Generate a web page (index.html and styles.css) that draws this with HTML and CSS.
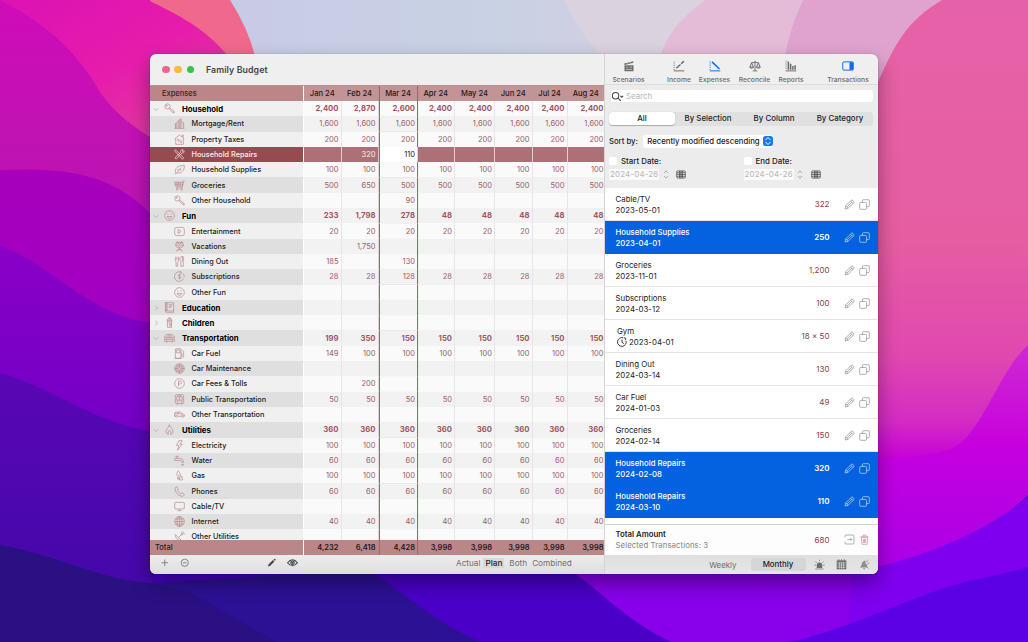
FILE: index.html
```html
<!DOCTYPE html>
<html lang="en">
<head>
  <meta charset="UTF-8">
  <meta name="viewport" content="width=device-width, initial-scale=1">
  <title>Family Budget</title>
  <link rel="stylesheet" href="styles.css">
</head>
<body>

<!-- Wallpaper -->
<svg class="wallpaper" viewBox="0 0 1028 642" preserveAspectRatio="none">
  <defs>
    <linearGradient id="w-left" x1="0" y1="0" x2="0" y2="1"><stop offset="0" stop-color="#cf0cb8"/><stop offset="1" stop-color="#b716b0"/></linearGradient>
    <linearGradient id="w-hot" x1="0" y1="0" x2="1" y2="1"><stop offset="0" stop-color="#dc12b4"/><stop offset=".5" stop-color="#e61cac"/><stop offset="1" stop-color="#dc4896"/></linearGradient>
    <linearGradient id="w-p1" x1="0" y1="0" x2="0" y2="1"><stop offset="0" stop-color="#a800bc"/><stop offset="1" stop-color="#a000c4"/></linearGradient>
    <linearGradient id="w-p2" x1="0" y1="0" x2="0" y2="1"><stop offset="0" stop-color="#8a00c6"/><stop offset="1" stop-color="#7000c6"/></linearGradient>
    <linearGradient id="w-p3" x1="0" y1="0" x2="0" y2="1"><stop offset="0" stop-color="#5a06b6"/><stop offset="1" stop-color="#4208a8"/></linearGradient>
    <linearGradient id="w-pink" x1="0" y1="0" x2="0" y2="1"><stop offset="0" stop-color="#e662a8"/><stop offset=".42" stop-color="#e65da2"/><stop offset=".62" stop-color="#e048b0"/><stop offset=".73" stop-color="#d42cc4"/><stop offset=".8" stop-color="#c600d8"/><stop offset="1" stop-color="#a400e8"/></linearGradient>
    <linearGradient id="w-mag" x1="0" y1="0" x2="0" y2="1"><stop offset="0" stop-color="#cf2ad0"/><stop offset=".45" stop-color="#c600de"/><stop offset="1" stop-color="#a800e8"/></linearGradient>
    <linearGradient id="w-sky" x1="0" y1="0" x2="1" y2="0"><stop offset="0" stop-color="#c9cae6"/><stop offset=".7" stop-color="#c8d2e4"/><stop offset="1" stop-color="#d0cfe2"/></linearGradient>
  </defs>
  <rect width="1028" height="642" fill="#4a00c8"/>
  <path d="M220 0H600V80H220z" fill="url(#w-sky)"/>
  <path d="M564 0C575 22 585 40 602 56H720V0z" fill="#dbd2df"/>
  <path d="M705 0C690 12 668 28 660 58H830V0z" fill="#e5bcd8"/>
  <path d="M803 0C795 18 788 36 785 58L890 110H950V0z" fill="#e0a3cf"/>
  <path d="M145 0H230Q248 28 255 56L220 60z" fill="#f0698c"/>
  <path d="M0 0H150V240H0z" fill="url(#w-left)"/>
  <path d="M0 0H148C180 16 205 28 228 56L155 60V140C135 128 115 114 100 92C85 66 60 30 0 0z" fill="url(#w-hot)"/>
  <path d="M0 170C60 168 110 170 155 218V350H0z" fill="url(#w-p1)"/>
  <path d="M0 246C50 262 90 318 155 323V450H0z" fill="url(#w-p2)"/>
  <path d="M0 373C50 386 95 424 155 432V610H0z" fill="url(#w-p3)"/>
  <path d="M0 545C60 556 100 582 150 583L374 570L480 642H0z" fill="#2d1195"/>
  <path d="M0 545C60 556 100 580 150 583L190 592L276 642H0z" fill="#2a1083"/>
  <path d="M374 560V574C400 590 435 622 480 642H675V560z" fill="#4b00c8"/>
  <path d="M560 556L575 574C600 590 625 620 671 642H1028V540z" fill="#8800ea"/>
  <path d="M942 0C905 22 895 45 878 82L860 100V575C930 560 980 540 1028 495V0z" fill="url(#w-pink)"/>
  <path d="M1028 345C1000 370 985 425 958 445C940 458 900 454 870 462V572C930 560 980 540 1028 495z" fill="url(#w-mag)"/>
  <path d="M850 574C930 555 980 535 1028 497V570L850 628z" fill="#7e00ee"/>
  <path d="M790 642C850 628 900 602 945 588C975 578 1005 575 1028 567V642z" fill="#5c00e6"/>
</svg>

<!-- Icon set, 16 x 16 -->
<svg class="icon-set">
  <symbol id="i-key" viewBox="0 0 16 16"><circle cx="5" cy="5" r="3.8"/><circle cx="4" cy="4" r=".8"/><path d="M7.2 8.2l6 6.3 1.6-.2.1-1.8-1.8-.6-.3-1.6-1.6-.4L8.4 7"/></symbol>
  <symbol id="i-building" viewBox="0 0 16 16"><path d="M1 15h14M2 15V8l4-2v9M6 6V4l4-3v14M10 5l4 2v8M7.5 5v1M7.5 8v1M7.5 11v1M12 8v1M12 11v1M4 9v1M4 12v1M3 8v7M8.500 3v12"/></symbol>
  <symbol id="i-house" viewBox="0 0 16 16"><path d="M1 7l7-5.500 7 5.500M2.500 6.500V15h11V6.500M12 4V1.500h1.500V5M6 12l4-4"/><circle cx="6" cy="8.500" r="1"/><circle cx="10" cy="11.500" r="1"/></symbol>
  <symbol id="i-tools" viewBox="0 0 16 16"><path d="M2 1l12 12-1.500 2L1 3zM14.500 2.500l-2 1.200-.8-.8L13 1C10 .5 9 3 10 4.500L2 12c-1 1.500.8 3 2 2l7.500-8.200c2 .8 4-1 3-3.300z"/></symbol>
  <symbol id="i-leaf" viewBox="0 0 16 16"><path d="M2 14c-1-8 3-12 13-12 .5 8-4 12-11 11M2 15L11 5M6 10V7M8 8.500h3"/></symbol>
  <symbol id="i-cart" viewBox="0 0 16 16"><path d="M15.500 1.500h-2l-1.500 10H3M1 3h12l-.8 6H2.300zM4 3v6M6.500 3v6M9 3v6M1.500 6H13"/><circle cx="4.500" cy="13.500" r="1.100"/><circle cx="11" cy="13.500" r="1.100"/></symbol>
  <symbol id="i-smile" viewBox="0 0 16 16"><circle cx="8" cy="8" r="7"/><path d="M4.500 9.500c1 3.500 6 3.500 7 0zM5.500 5v2M10.500 5v2"/></symbol>
  <symbol id="i-play" viewBox="0 0 16 16"><rect x="1" y="2" width="14" height="12" rx="3"/><path d="M6 5l4.500 3L6 11z"/></symbol>
  <symbol id="i-vacation" viewBox="0 0 16 16"><path d="M3 6V2h10v4M2 6h12l-2 3H4zM5 2V0M11 2V0M8 9v3M3 15l5-3 5 3M5 12h6M5 3.500h6"/></symbol>
  <symbol id="i-fork" viewBox="0 0 16 16"><path d="M2 1v5c0 2 1 2 1 3v6h2.500V9c0-1 1-1 1-3V1M4.200 1v5M10 1c-2 1-2 6 0 7v7h3.500V1zM12 1v7"/></symbol>
  <symbol id="i-sub" viewBox="0 0 16 16"><path d="M14 11A7 7 0 1 1 11 2M13 4a7 7 0 0 1 2 5M11 2L9 .5M11 2L9.500 4M10 6c-1-1.500-4-1-3.500.8S10 8 10 9.500 7 11.500 6 10M8 4v8"/></symbol>
  <symbol id="i-book" viewBox="0 0 16 16"><path d="M2 1h12v14H3.500Q2 15 2 13.500zM4.500 1v12M3.200 1v12M2 13h12M7 4h5M7 6h5M7 8h3"/></symbol>
  <symbol id="i-bottle" viewBox="0 0 16 16"><path d="M7 3V1h2v2M5 5V3h6v2M4.500 5h7v2h-7zM5 7v8h6V7M7 9h4M7 11h4M7 13h4"/></symbol>
  <symbol id="i-garage" viewBox="0 0 16 16"><path d="M1 13V5l3-3h8l3 3v8M1 6h14M3 13V9l1.500-2h7L13 9v4h-2v-1H5v1zM3 9.500h10M5 4h6"/></symbol>
  <symbol id="i-fuel" viewBox="0 0 16 16"><path d="M2 15V2q0-1 1-1h6q1 0 1 1v13zM3.500 3h5v4h-5zM10 8h1.500v4c0 2 2.500 2 2.500 0V5l-2.500-2M1 15h10"/></symbol>
  <symbol id="i-tire" viewBox="0 0 16 16"><circle cx="8" cy="8" r="7"/><circle cx="8" cy="8" r="5.500"/><circle cx="8" cy="8" r="3.800"/><circle cx="8" cy="8" r="1.700"/><path d="M8 1v5.300M8 9.700V15M1 8h5.300M9.700 8H15"/></symbol>
  <symbol id="i-parking" viewBox="0 0 16 16"><circle cx="8" cy="8" r="7"/><path d="M6.500 12V4.500H9q2 .2 2 2T9 8.600H6.500"/></symbol>
  <symbol id="i-train" viewBox="0 0 16 16"><rect x="2" y="1" width="12" height="13" rx="1.500"/><path d="M4 4h8v5H4zM8 4v5M5 2.500h6M4 15.500l2-2M12 15.500l-2-2"/><circle cx="5" cy="11.300" r=".8"/><circle cx="11" cy="11.300" r=".8"/></symbol>
  <symbol id="i-car" viewBox="0 0 16 16"><path d="M2 10.500H.8V6.500Q1 4.500 3 4.500h6l3 2.500 2 .5q1.500.5 1.200 3H14M5 10.500h6M1 7h11M6 4.500V7"/><circle cx="3.500" cy="10.500" r="1.500"/><circle cx="12.500" cy="10.500" r="1.500"/></symbol>
  <symbol id="i-flame" viewBox="0 0 16 16"><path d="M8 1c1 4 5 5.500 5 9.500 0 3-2 4.500-3.500 4.500 1.500-2 0-4-1.500-6-1.500 2-3 4-1.500 6C4.500 15 3 13 3 10.500 3 8 7 5 8 1z"/></symbol>
  <symbol id="i-bolt" viewBox="0 0 16 16"><path d="M7 1L3.500 8H7l-2 7 7-9H8.500L12 1z"/></symbol>
  <symbol id="i-tap" viewBox="0 0 16 16"><path d="M2 2h5M4.500 2v3M1 5h6c5 0 7 2 7 5.500h-3C11 9 10 8 7 8H1zM11 13.500h3l-1.500 2z"/></symbol>
  <symbol id="i-gas" viewBox="0 0 16 16"><path d="M6 1c1 2 3 3 3 5.500S4 10 4 6.500 6 4 6 1zM6 10v4M8 10h4v4.500H8zM9 8.500h2M4 11.500l4 2"/></symbol>
  <symbol id="i-phone" viewBox="0 0 16 16"><path d="M4 1L1.500 3C1 9 7 15.500 13 15l2.500-2.500L12 10l-2 1.500C8 10.500 6 8.500 5 6.500l1.500-2z"/></symbol>
  <symbol id="i-tv" viewBox="0 0 16 16"><rect x="1" y="2" width="14" height="9.500" rx="1"/><path d="M8 11.500V14M5 14h6"/></symbol>
  <symbol id="i-globe" viewBox="0 0 16 16"><circle cx="8" cy="8" r="7"/><ellipse cx="8" cy="8" rx="3.500" ry="7"/><path d="M8 1v14M1 8h14M2 4.500h12M2 11.500h12"/></symbol>
  <symbol id="i-dish" viewBox="0 0 16 16"><path d="M2 5c0 6 4 9 9 9zM6.500 9.500L11 5M4 13l-1 3h6"/><circle cx="11.500" cy="4.500" r="1.200"/><path d="M11 1q4 0 4 4"/></symbol>
  <symbol id="i-pencil" viewBox="0 0 16 16"><path d="M1.500 14.500l1-4.500 8-8q1.200-1 2.500 0l1 1q1 1.200 0 2.500l-8 8zM2.500 10l3.500 3.500M9.500 3l3.500 3.500M4.500 11.500l7-7"/></symbol>
  <symbol id="i-copy" viewBox="0 0 16 16"><rect x="1" y="5" width="10" height="10" rx="1.500"/><path d="M5 5V2.500Q5 1 6.500 1h7Q15 1 15 2.500v7q0 1.500-1.500 1.500H11"/></symbol>
</svg>

<div class="window">
  <div class="main">
    <header class="titlebar">
      <span class="light red"></span><span class="light yellow"></span><span class="light green"></span>
      <h1>Family Budget</h1>
    </header>

    <div class="sheet">
      <div class="row head">
        <div class="name">Expenses</div>
        <div class="cell">Jan 24</div><div class="cell">Feb 24</div><div class="cell current">Mar 24</div><div class="cell">Apr 24</div><div class="cell">May 24</div><div class="cell">Jun 24</div><div class="cell">Jul 24</div><div class="cell">Aug 24</div>
      </div>
      <div class="rows" id="rows"></div>
      <div class="row total">
        <div class="name">Total</div>
        <div class="cell">4,232</div><div class="cell">6,418</div><div class="cell current">4,428</div><div class="cell">3,998</div><div class="cell">3,998</div><div class="cell">3,998</div><div class="cell">3,998</div><div class="cell">3,998</div>
      </div>
    </div>

    <footer class="bottombar">
      <div class="edit-tools">
        <svg viewBox="0 0 16 16"><path d="M8 2.500v11M2.500 8h11"/></svg>
        <svg viewBox="0 0 16 16"><circle cx="8" cy="8" r="6"/><path d="M5 8h6"/></svg>
        <svg class="push solid" viewBox="0 0 16 16"><path d="M1.500 14.500l1-3.500 7.500-7.500 2.500 2.500L5 13.500zM11 2.500l1-1q1-.7 2 .2t.3 2.100l-1 1z"/></svg>
        <svg class="eye" viewBox="0 0 20 16"><path d="M1 8q9-11 18 0-9 11-18 0z"/><circle cx="10" cy="8" r="3.200"/><circle cx="10" cy="8" r="1"/></svg>
      </div>
      <div class="modes"><span>Actual</span><span class="on">Plan</span><span>Both</span><span>Combined</span></div>
    </footer>
  </div>

  <aside class="side">
    <nav class="toolbar">
      <div class="tool scenarios">
        <svg viewBox="0 0 16 16"><path class="fill" d="M2 7h12v8H2zM1.500 4.500l12-3 .5 2-12 3z"/><path class="cut" d="M4 9.500h3M9 9.500h3M4 12.500h8M5 3.500l1 1.800M9 2.500l1 1.800"/></svg>
        <span>Scenarios</span>
      </div>
      <div class="tool income">
        <svg viewBox="0 0 16 16"><path class="dots" d="M1.500 2v12"/><path d="M1 14.500h14"/><path class="thick" d="M4.500 11l5.500-5M11 5l3.500-3.500"/></svg>
        <span>Income</span>
      </div>
      <div class="tool expenses">
        <svg viewBox="0 0 16 16"><path class="dots" d="M1.500 2v12"/><path d="M1 14.500h14"/><path class="thick" d="M4 2.500l10 9.500"/></svg>
        <span>Expenses</span>
      </div>
      <div class="tool reconcile">
        <svg viewBox="0 0 16 16"><path d="M8 1v13M5 14.500h6M2.500 4Q8 2 13.500 4M3.500 4L1 9.500h5zM12.500 4L10 9.500h5zM1 10q2.500 2 5 0M10 10q2.500 2 5 0"/></svg>
        <span>Reconcile</span>
      </div>
      <div class="tool reports">
        <svg viewBox="0 0 16 16"><path class="dots" d="M1.500 1v13"/><path d="M1 14.500h14"/><path class="thick" d="M4.500 2v11M7.500 5v8M10.500 8v5M13.500 7v6"/></svg>
        <span>Reports</span>
      </div>
      <div class="tool transactions">
        <svg viewBox="0 0 16 16"><rect x="1" y="2.500" width="14" height="11" rx="1.500"/><path class="fill" d="M10 3h5v10h-5z"/></svg>
        <span>Transactions</span>
      </div>
    </nav>

    <section class="filters">
      <div class="search">
        <svg viewBox="0 0 20 16"><circle cx="6.500" cy="7" r="4.700"/><path d="M10 10.500l4 4M13.500 7l2 2 2-2"/></svg>
        <span>Search</span>
      </div>
      <div class="segments"><span class="on">All</span><span>By Selection</span><span>By Column</span><span>By Category</span></div>
      <div class="sort">
        <span>Sort by:</span>
        <div class="popup">Recently modified descending
          <i><svg viewBox="0 0 10 10"><path d="M2.500 4L5 1.500 7.500 4M2.500 6L5 8.500 7.500 6"/></svg></i>
        </div>
      </div>
      <div class="dates">
        <div class="date">
          <label><i></i>Start Date:</label>
          <div class="field"><span>2024-04-26</span><svg class="step" viewBox="0 0 8 14"><path d="M1.500 5L4 2l2.500 3M1.500 9L4 12l2.500-3"/></svg><svg class="cal" viewBox="0 0 14 12"><rect x="1" y="1" width="12" height="10" rx="1"/><path d="M1 3.500h12M1 6h12M1 8.500h12M5 1v10M9 1v10M7 1v10"/></svg></div>
        </div>
        <div class="date">
          <label><i></i>End Date:</label>
          <div class="field"><span>2024-04-26</span><svg class="step" viewBox="0 0 8 14"><path d="M1.500 5L4 2l2.500 3M1.500 9L4 12l2.500-3"/></svg><svg class="cal" viewBox="0 0 14 12"><rect x="1" y="1" width="12" height="10" rx="1"/><path d="M1 3.500h12M1 6h12M1 8.500h12M5 1v10M9 1v10M7 1v10"/></svg></div>
        </div>
      </div>
    </section>

    <section class="transactions-list" id="transactions"></section>

    <section class="summary">
      <div class="what"><b>Total Amount</b><span>Selected Transactions: 3</span></div>
      <div class="amount">680</div>
      <svg viewBox="0 0 16 16"><path d="M1.500 5V3q0-1.500 1.500-1.500h10q1.500 0 1.500 1.500v10q0 1.500-1.500 1.500H3q-1.500 0-1.500-1.500v-2M5 8h6M9 5.500L11.500 8 9 10.500"/></svg>
      <svg class="trash" viewBox="0 0 16 16"><path d="M2 4h12M6 3.500V1.500h4v2M3.500 5l.8 10h7.400l.8-10zM6.300 7l.3 6M9.700 7l-.3 6M8 7v6"/></svg>
    </section>

    <footer class="sidebar-bottom">
      <span>Weekly</span><span class="on">Monthly</span>
      <svg viewBox="0 0 16 16"><path class="fill" d="M4 13V9a4 4 0 0 1 8 0v4z"/><path d="M2 14.500h12M8 1v2M2 4l2 1.500M14 4l-2 1.500M.5 9H3M13 9h2.500"/></svg>
      <svg viewBox="0 0 16 16"><path class="fill" d="M1 2h14v13H1z"/><path d="M4 0v3M8 0v3M12 0v3"/><path class="cut" d="M2 5.500h12M2 8.700h12M2 12h12M5 5v9M8 5v9M11 5v9"/></svg>
      <svg class="dim" viewBox="0 0 16 16"><path class="fill" d="M1 12.500C5 10 3 4 8 2.500L9.500 4v3L12 8.500v4zM5.500 13.500h4l-2 2z"/><path d="M9 2l3 3M14 1l-2 3M15 6l-3 1M14 14L9 9"/></svg>
    </footer>
  </aside>
</div>

<script src="script.js"></script>
</body>
</html>
```

FILE: styles.css
```css
* {
  box-sizing: border-box;
}

body {
  margin: 0;
  height: 642px;
  overflow: hidden;
  position: relative;
  font-family: Inter, "Liberation Sans", sans-serif;
  font-size: 7.3px;
  color: #222;
}

h1 {
  margin: 0;
}

svg {
  display: block;
  flex: none;
  fill: none;
  stroke: currentColor;
  stroke-width: 1;
}

.wallpaper {
  position: absolute;
  inset: 0;
  width: 1028px;
  height: 642px;
  stroke: none;
}

.icon-set {
  position: absolute;
  width: 0;
  height: 0;
}

.window {
  position: relative;
  display: flex;
  width: 728px;
  height: 520px;
  margin: 53.5px 0 0 150px;
  border-radius: 6px;
  background: #f0eff0;
  box-shadow: 0 0 1px rgba(0, 0, 0, 0.5), 0 9px 20px rgba(0, 0, 0, 0.38);
}

.main {
  width: 454px;
  display: flex;
  flex-direction: column;
}

/* Title bar */
.titlebar {
  height: 31.5px;
  display: flex;
  align-items: center;
  padding: 0.5px 0 0 12px;
  gap: 4.5px;
  border-radius: 6px 0 0 0;
}

.light {
  width: 7.8px;
  height: 7.8px;
  border-radius: 50%;
}

.red { background: #ee6590; }
.yellow { background: #f5bd3e; }
.green { background: #38c14c; }

.titlebar h1 {
  margin-left: 7px;
  font-size: 8.8px;
  font-weight: 600;
  color: #444;
  letter-spacing: 0.1px;
}

/* Budget sheet */
.row {
  display: grid;
  grid-template-columns: 154px 37.5px 37px 39px 37.5px 40px 37.5px 35px 36.5px;
  height: 15.31px;
}

.name {
  display: flex;
  align-items: center;
  border-right: 1.5px solid #fdfdfd;
  white-space: nowrap;
  font-weight: 500;
}

.cell {
  display: flex;
  align-items: center;
  justify-content: flex-end;
  padding-right: 2px;
  border-right: 1px solid #e6e6e6;
  color: #a05c67;
  font-size: 7.5px;
}

.cell:last-child {
  padding-right: 0.5px;
  border-right: 0;
}

.cell.current {
  padding-right: 1.5px;
  border-left: 1px solid #a8606a;
  border-right: 1px solid #a8606a;
  box-shadow: 0 0 0 0.5px rgba(168, 96, 106, 0.25);
  clip-path: inset(0 -1px);
}

.head {
  height: 16px;
  border-top: 1px solid #b98f91;
  background: #c39496;
}

.head .name {
  padding-left: 12px;
  background: #bc8688;
  color: #3a2427;
  font-size: 7.5px;
}

.head .cell {
  justify-content: center;
  padding: 0;
  border-right-color: transparent;
  color: #221a1b;
  font-size: 7.6px;
  font-weight: 500;
}

.head .cell.current {
  border-right-color: #a8606a;
}

.rows {
  height: 438.5px;
  overflow: hidden;
}

.rows .row { background: #fafafa; }
.rows .row .name { background: #f0f0f0; }
.rows .row:nth-child(even) { background: #f2f2f2; }
.rows .row:nth-child(even) .name { background: #dfdfdf; }

.chevron {
  width: 6px;
  height: 6px;
  margin-left: 3px;
  color: #aaa;
}

.pic {
  width: 11px;
  height: 11px;
  margin: 0 7px 0 5px;
  color: #b9868a;
}

.item .pic {
  margin: 0 6.5px 0 24px;
}

.rows .row.group .name {
  font-weight: 700;
  font-size: 7.8px;
  color: #000;
}

.group .cell {
  font-weight: 700;
  font-size: 7.7px;
  color: #a25661;
}

.rows .row.selected { background: #ac7076; }
.rows .row.selected .name { background: #974a50; color: #fbefef; }
.rows .selected .pic { color: #f4e2e2; }
.rows .selected .cell { color: #fbeeee; border-right-color: #e5cdd0; }
.rows .selected .cell.current { background: #fff; color: #222; }

.total {
  height: 15.5px;
  background: #bb8688;
}

.total .name { padding-left: 5px; color: #271a1b; font-size: 7.5px; }
.total .cell { color: #271a1b; font-weight: 600; font-size: 7.5px; border-right-color: transparent; }
.total .cell.current { border-color: #a26a70; }

/* Bottom bar */
.bottombar {
  height: 18.5px;
  display: flex;
  align-items: center;
  background: linear-gradient(#ededed, #dedede);
  border-radius: 0 0 0 6px;
  padding-bottom: 3px;
}

.edit-tools {
  width: 153px;
  display: flex;
  align-items: center;
  gap: 10px;
  padding: 0 5px 0 10px;
  color: #6b6b6b;
}

.edit-tools svg {
  width: 9.5px;
  height: 9.5px;
  stroke-width: 1.3;
}

.edit-tools .push { margin: 0 1.5px 0 auto; color: #444; }
.edit-tools .eye { width: 11px; stroke-width: 2; color: #444; margin-left: -1px; }
.edit-tools .solid { fill: currentColor; stroke: none; }

.modes {
  margin-left: 153px;
  display: flex;
  gap: 3px;
  font-size: 8.2px;
  color: #707070;
}

.modes .on {
  padding: 0 2px;
  background: #d9d9d9;
  color: #222;
  font-weight: 500;
}

.modes span:nth-child(3) { margin: 0 2px; }

/* Side panel */
.side {
  width: 274px;
  display: flex;
  flex-direction: column;
  border-left: 1px solid #d4d4d4;
}

.toolbar {
  height: 31.5px;
  display: flex;
  padding-left: 0.5px;
  border-bottom: 1px solid #dcdcdc;
  color: #6c6c6c;
  font-size: 6.75px;
}

.tool {
  display: flex;
  flex-direction: column;
  align-items: center;
  padding-top: 6.5px;
  gap: 2.5px;
  font-weight: 500;
}

.tool svg {
  width: 12px;
  height: 12px;
  stroke-width: 1.3;
}

.scenarios { width: 46px; margin-right: 10.5px; }
.income { width: 34px; }
.expenses { width: 37px; }
.reconcile { width: 43px; }
.reports { width: 30px; margin-right: 12px; }
.transactions { width: 60px; }

.expenses svg,
.transactions svg { color: #0a6cf0; }

.fill { fill: currentColor; stroke: none; }
.cut { stroke: #eee; stroke-width: 0.8; }
.thick { stroke-width: 2; }
.dots { stroke-dasharray: 1 1.5; stroke-width: 1.5; }

.filters {
  height: 103px;
  padding: 5px 5px 0 4px;
  background: #ececec;
  font-size: 7.9px;
}

.search {
  display: flex;
  align-items: center;
  gap: 1px;
  height: 12px;
  margin-left: 2px;
  border-radius: 3px;
  background: #fff;
  color: #b5b5b5;
}

.search svg {
  width: 14px;
  height: 11px;
  color: #444;
  stroke-width: 1.5;
}

.segments {
  display: flex;
  align-items: center;
  height: 14px;
  margin-top: 9.5px;
  border-radius: 4px;
  background: #e0e0e0;
}

.segments span {
  flex: 1;
  text-align: center;
  line-height: 12.5px;
  font-weight: 500;
}

.segments .on {
  border-radius: 3.5px;
  background: #fff;
  box-shadow: 0 0.5px 1px rgba(0, 0, 0, 0.25);
}

.sort {
  display: flex;
  align-items: center;
  gap: 5px;
  margin-top: 9.5px;
  font-weight: 500;
}

.sort > span { font-size: 7.7px; }

.popup {
  display: flex;
  align-items: center;
  gap: 3.5px;
  height: 12.5px;
  padding: 0 0 0 4.5px;
  border-radius: 3px;
  background: #fff;
  white-space: nowrap;
  font-size: 7.75px;
}

.popup i {
  width: 10px;
  height: 10px;
  border-radius: 2.5px;
  background: #1a78f2;
  color: #fff;
}

.popup svg {
  width: 10px;
  height: 10px;
}

.dates {
  display: flex;
  margin-top: 8px;
}

.date { flex: none; width: 134.5px; }

.date label {
  display: flex;
  align-items: center;
  gap: 4px;
  height: 11px;
  font-weight: 500;
}

.date label i {
  width: 8px;
  height: 8px;
  border-radius: 2px;
  background: #fff;
}

.field {
  display: flex;
  align-items: center;
  height: 15.5px;
  color: #b9b9b9;
}

.field span {
  width: 50px;
  height: 11px;
  padding-left: 1px;
  background: #fafafa;
  line-height: 11px;
  letter-spacing: 0.2px;
  white-space: nowrap;
}

.step { width: 6px; height: 11px; margin-left: 3.5px; color: #999; }
.cal { width: 10px; height: 9px; margin-left: 7.5px; color: #444; }

.transactions-list {
  height: 335.5px;
  background: #fff;
}

.entry {
  display: flex;
  align-items: center;
  height: 33.05px;
  padding: 0 8px 0 10.5px;
  border-bottom: 1px solid #e4e4e4;
}

.entry .what,
.summary .what {
  flex: 1;
  display: flex;
  flex-direction: column;
  font-size: 7.85px;
  line-height: 11px;
}

.entry .what { padding-top: 1px; }

.entry .repeat {
  padding-left: 1.5px;
}

.date-line {
  display: flex;
  align-items: center;
  gap: 2px;
}

.date-line svg {
  width: 10px;
  height: 10px;
  stroke-width: 1.4;
}

.amount {
  margin-right: 14px;
  color: #8c4048;
  font-size: 8px;
}

.entry svg.act,
.summary > svg {
  width: 11px;
  height: 11px;
  margin-left: 4.5px;
  color: #8c8c8c;
}

.entry svg.act:first-of-type,
.summary > svg:first-of-type {
  margin-left: 0;
}

.entry.chosen {
  background: #0462e0;
  border-bottom-color: #0462e0;
  color: #fff;
  font-weight: 500;
}

.chosen .what { font-size: 7.75px; }
.entry.chosen .amount { color: #fff; font-weight: 600; }
.entry.chosen svg.act { color: #c9def9; }

.summary {
  flex: 1;
  display: flex;
  align-items: center;
  padding: 0 8px 0 10.5px;
  border-top: 1px solid #d0d0d0;
  background: #fdfdfd;
}

.summary b { font-weight: 600; font-size: 7.8px; }
.summary span { color: #858585; letter-spacing: 0.05px; }
.summary > .trash { color: #d2849c; }

.sidebar-bottom {
  height: 18.5px;
  display: flex;
  align-items: center;
  justify-content: flex-end;
  padding: 1px 8.5px 0 0;
  background: linear-gradient(#dfdfdf, #e6e6e6);
  border-radius: 0 0 6px 0;
  color: #6d6d6d;
  font-size: 7.9px;
}

.sidebar-bottom .on {
  width: 55px;
  margin-left: 14px;
  line-height: 13px;
  text-align: center;
  background: #d6d6d6;
  color: #222;
  border-radius: 2px;
  font-weight: 500;
}

.sidebar-bottom svg {
  width: 11px;
  height: 11px;
  margin-left: 11.5px;
}

.sidebar-bottom .on + svg { margin-left: 8px; }
.sidebar-bottom .dim { color: #8d8d8d; }
```

FILE: script.js
```js
// months: Jan .. Aug; a short list repeats its last value
const budget = [
  { name: "Household", icon: "key", open: true, m: ["2,400", "2,870", "2,600", "2,400"] },
  { name: "Mortgage/Rent", icon: "building", m: ["1,600"] },
  { name: "Property Taxes", icon: "house", m: ["200"] },
  { name: "Household Repairs", icon: "tools", m: ["", "320", "110", ""], selected: true },
  { name: "Household Supplies", icon: "leaf", m: ["100"] },
  { name: "Groceries", icon: "cart", m: ["500", "650", "500"] },
  { name: "Other Household", icon: "key", m: ["", "", "90", ""] },
  { name: "Fun", icon: "smile", open: true, m: ["233", "1,798", "278", "48"] },
  { name: "Entertainment", icon: "play", m: ["20"] },
  { name: "Vacations", icon: "vacation", m: ["", "1,750", ""] },
  { name: "Dining Out", icon: "fork", m: ["185", "", "130", ""] },
  { name: "Subscriptions", icon: "sub", m: ["28", "28", "128", "28"] },
  { name: "Other Fun", icon: "smile", m: [""] },
  { name: "Education", icon: "book", open: false, m: [""] },
  { name: "Children", icon: "bottle", open: false, m: [""] },
  { name: "Transportation", icon: "garage", open: true, m: ["199", "350", "150"] },
  { name: "Car Fuel", icon: "fuel", m: ["149", "100"] },
  { name: "Car Maintenance", icon: "tire", m: [""] },
  { name: "Car Fees & Tolls", icon: "parking", m: ["", "200", ""] },
  { name: "Public Transportation", icon: "train", m: ["50"] },
  { name: "Other Transportation", icon: "car", m: [""] },
  { name: "Utilities", icon: "flame", open: true, m: ["360"] },
  { name: "Electricity", icon: "bolt", m: ["100"] },
  { name: "Water", icon: "tap", m: ["60"] },
  { name: "Gas", icon: "gas", m: ["100"] },
  { name: "Phones", icon: "phone", m: ["60"] },
  { name: "Cable/TV", icon: "tv", m: [""] },
  { name: "Internet", icon: "globe", m: ["40"] },
  { name: "Other Utilities", icon: "dish", m: [""] }
];

const transactions = [
  ["Cable/TV", "2023-05-01", "322"],
  ["Household Supplies", "2023-04-01", "250", "chosen"],
  ["Groceries", "2023-11-01", "1,200"],
  ["Subscriptions", "2024-03-12", "100"],
  ["Gym", "2023-04-01", "18 × 50", "repeating"],
  ["Dining Out", "2024-03-14", "130"],
  ["Car Fuel", "2024-01-03", "49"],
  ["Groceries", "2024-02-14", "150"],
  ["Household Repairs", "2024-02-08", "320", "chosen"],
  ["Household Repairs", "2024-03-10", "110", "chosen"]
];

function chevron(open) {
  const d = open ? "M1 3l3 3 3-3" : "M3 1l3 3-3 3";
  return `<svg class="chevron" viewBox="0 0 8 8"><path d="${d}"/></svg>`;
}

document.getElementById("rows").innerHTML = budget.map(row => {
  const group = row.open !== undefined;
  let cells = "";
  for (let i = 0; i < 8; i++) {
    const value = row.m[Math.min(i, row.m.length - 1)];
    cells += `<div class="cell${i === 2 ? " current" : ""}">${value}</div>`;
  }
  return `<div class="row ${group ? "group" : "item"}${row.selected ? " selected" : ""}">
    <div class="name">${group ? chevron(row.open) : ""}<svg class="pic"><use href="#i-${row.icon}"/></svg>${row.name.replace("&", "&amp;")}</div>${cells}
  </div>`;
}).join("");

const clock = `<svg viewBox="0 0 16 16"><path d="M14.500 6A7 7 0 1 1 10 1.300M8 4v4.500l3 2M11 1l3 1-1 3"/></svg>`;

document.getElementById("transactions").innerHTML = transactions.map(([name, date, amount, kind]) => `
  <div class="entry ${kind === "chosen" ? "chosen" : ""}">
    <div class="what ${kind === "repeating" ? "repeat" : ""}"><span>${name}</span><span class="date-line">${kind === "repeating" ? clock : ""}${date}</span></div>
    <div class="amount">${amount}</div>
    <svg class="act"><use href="#i-pencil"/></svg>
    <svg class="act"><use href="#i-copy"/></svg>
  </div>`).join("");
```
